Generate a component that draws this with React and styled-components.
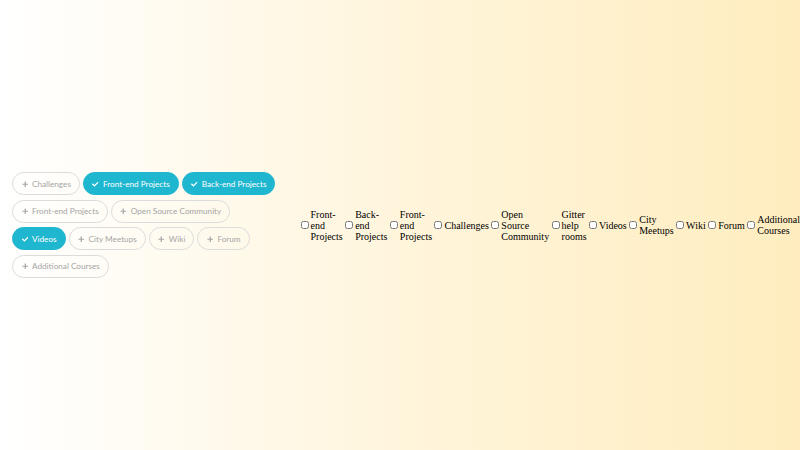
import React, { useState } from 'react';
import styled, { createGlobalStyle } from 'styled-components';
import { FaPlus, FaCheck } from 'react-icons/fa';

const GlobalStyle = createGlobalStyle`
  html, body { margin: 0; padding: 0; }
  body {
    background: linear-gradient(to right, #ffffff 0%, #fff5dc 50%, #ffedbf 100%);
    min-height: 100vh;
  }
`;

const Page = styled.div`
  display: flex;
  align-items: center;
  height: 450px;
  width: 800px;
  overflow: hidden;
`;

const ChipPanel = styled.div`
  flex: 0 0 270px;
  padding: 0 16px 0 12px;
  display: flex;
  flex-wrap: wrap;
  column-gap: 3px;
  row-gap: 4.5px;
`;

const Chip = styled.button`
  display: inline-flex;
  align-items: center;
  gap: 4px;
  height: 23px;
  padding: 0 8px 0 8.5px;
  border-radius: 12px;
  border: 1.5px solid ${(p) => (p.$active ? '#1fb6cf' : '#dcdcdc')};
  background: ${(p) => (p.$active ? '#1fb6cf' : 'transparent')};
  color: ${(p) => (p.$active ? '#ffffff' : '#a5a5a5')};
  font-family: Lato, "Noto Sans", sans-serif;
  font-size: 8.2px;
  cursor: pointer;
  white-space: nowrap;
  svg { width: 6.5px; height: 6.5px; flex: 0 0 auto; }
`;

const CheckList = styled.div`
  flex: 1 1 auto;
  min-width: 0;
  display: flex;
  align-items: center;
  font-family: "Liberation Serif", "Times New Roman", serif;
  font-size: 10px;
  color: #000;
`;

const CheckItem = styled.label`
  display: flex;
  align-items: center;
  min-width: 0;
`;

const Box = styled.input`
  width: 8px;
  height: 8px;
  margin: 2px 2px 2px 2.5px;
  flex: 0 0 auto;
`;

const LabelText = styled.span`
  width: min-content;
`;

const chips = [
  { label: 'Challenges', active: false },
  { label: 'Front-end Projects', active: true },
  { label: 'Back-end Projects', active: true },
  { label: 'Front-end Projects', active: false },
  { label: 'Open Source Community', active: false },
  { label: 'Videos', active: true },
  { label: 'City Meetups', active: false },
  { label: 'Wiki', active: false },
  { label: 'Forum', active: false },
  { label: 'Additional Courses', active: false },
];

const options = [
  'Front-end Projects',
  'Back-end Projects',
  'Front-end Projects',
  'Challenges',
  'Open Source Community',
  'Gitter help rooms',
  'Videos',
  'City Meetups',
  'Wiki',
  'Forum',
  'Additional Courses',
];

export default function App() {
  const [state, setState] = useState(chips.map((c) => c.active));

  const toggle = (i) => setState((s) => s.map((v, j) => (j === i ? !v : v)));

  return (
    <>
      <GlobalStyle />
      <Page>
        <ChipPanel>
          {chips.map((c, i) => (
            <Chip key={i} $active={state[i]} onClick={() => toggle(i)}>
              {state[i] ? <FaCheck /> : <FaPlus />}
              {c.label}
            </Chip>
          ))}
        </ChipPanel>
        <CheckList>
          {options.map((o, i) => (
            <CheckItem key={i}>
              <Box type="checkbox" />
              <LabelText>{o}</LabelText>
            </CheckItem>
          ))}
        </CheckList>
      </Page>
    </>
  );
}
